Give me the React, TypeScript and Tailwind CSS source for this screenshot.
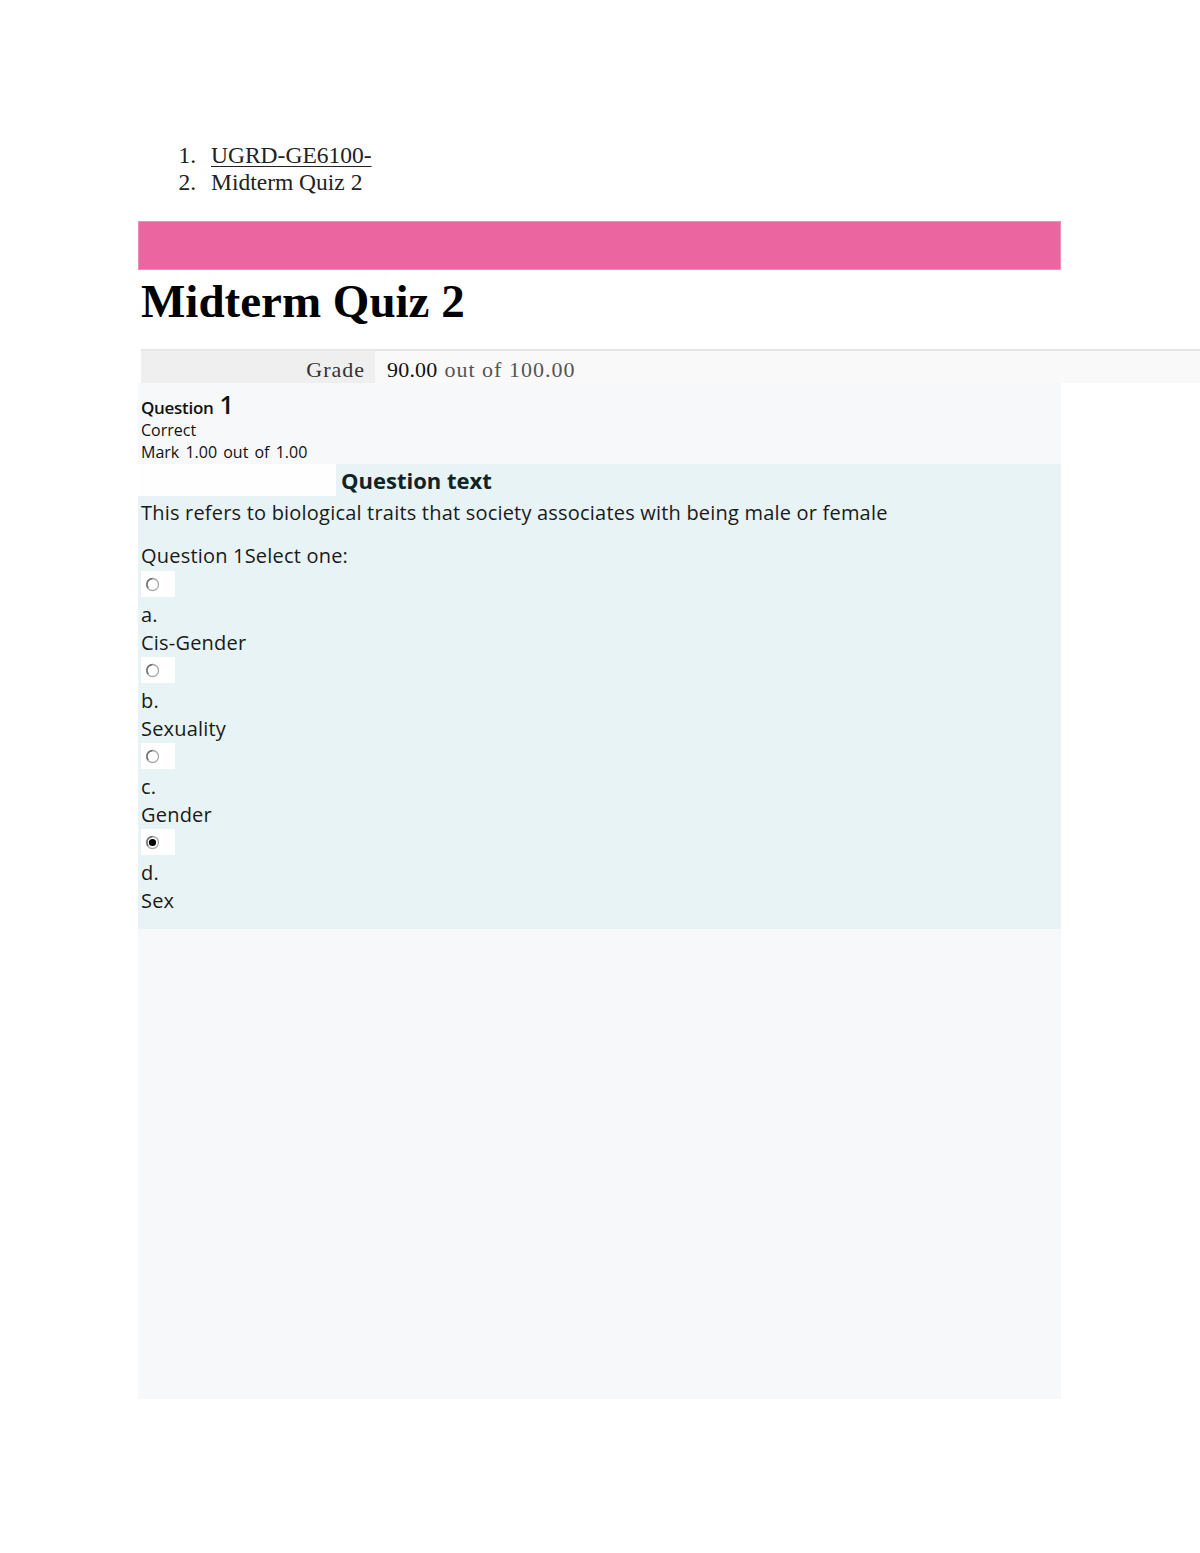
import React from "react";

const serif = { fontFamily: '"Liberation Serif", "Times New Roman", serif' };
const sans = { fontFamily: '"Open Sans", "Noto Sans", sans-serif' };

function Radio({ checked }: { checked?: boolean }) {
  return (
    <div className="w-[34px] h-[26px] bg-white flex items-center pl-[4px]">
      <svg width="15" height="15" viewBox="0 0 15 15">
        <circle cx="7.5" cy="7.5" r="6" fill="#ffffff" stroke="#a8a8a8" strokeWidth="1.3" />
        <path d="M3.3 11.2 A6 6 0 0 1 7.5 1.5" fill="none" stroke="#707070" strokeWidth="1.3" />
        {checked && <circle cx="7.5" cy="7.5" r="3.6" fill="#000" />}
      </svg>
    </div>
  );
}

const options = [
  { l: "a.", t: "Cis-Gender" },
  { l: "b.", t: "Sexuality" },
  { l: "c.", t: "Gender" },
  { l: "d.", t: "Sex", checked: true },
];

export default function App() {
  return (
    <div className="w-[1200px] min-h-[1553px] bg-white overflow-hidden">
      <div className="pt-[142px] text-[23.5px] leading-[27px] text-[#222]" style={serif}>
        <div className="flex">
          <span className="w-[211px] pr-[15px] text-right">1.</span>
          <span className="underline decoration-1 underline-offset-[3px]">UGRD-GE6100-</span>
        </div>
        <div className="flex">
          <span className="w-[211px] pr-[15px] text-right">2.</span>
          <span>Midterm Quiz 2</span>
        </div>
      </div>

      <div className="ml-[138px] w-[923px] mt-[25px]">
        <div className="h-[49px] bg-[#eb66a1] border border-[#f08cb8]" />
        <h1 className="mt-[8px] h-[46px] leading-[46px] text-[47px] font-bold text-black pl-[3px]" style={serif}>
          Midterm Quiz 2
        </h1>

        <div className="mt-[25px] ml-[3px] w-[1059px] border-t-2 border-[#e6e6e6]">
          <div className="flex h-[32px] items-center text-[22px] text-[#333] tracking-[1px]" style={serif}>
            <div className="w-[234px] h-full bg-[#efefef] flex items-center justify-end pr-[10px] pt-[5px]">
              Grade
            </div>
            <div className="flex-1 h-full bg-[#f9f9f9] flex items-center pl-[12px] pt-[5px]">
              <span className="text-[#111] tracking-[0.2px]">90.00</span>
              <span className="ml-[7px] text-[#555]">out of 100.00</span>
            </div>
          </div>
        </div>

        <div className="h-[81px] bg-[#f7f8fa] pl-[3px] pt-[5px] text-[#111]" style={sans}>
          <div className="h-[28px] flex items-end leading-none">
            <span className="text-[17px] font-semibold tracking-[-0.3px]">Question</span>
            <span className="text-[25px] font-semibold ml-[6px] relative top-[1px]">1</span>
          </div>
          <div className="text-[16px] leading-[24px] mt-[2px]">Correct</div>
          <div className="text-[16px] leading-[20px] [word-spacing:2px]">Mark 1.00 out of 1.00</div>
        </div>

        <div className="bg-[#e7f3f5] pb-[14px] text-[#1a1a1a]" style={sans}>
          <div className="flex h-[32px]">
            <div className="w-[198px] bg-[#fefefe]" />
            <div className="pl-[5px] text-[22px] font-bold leading-[33px] text-[#0f2426]">Question text</div>
          </div>
          <div className="pl-[3px] text-[20px] leading-[32px] tracking-[0.2px] mt-[1px]">
            This refers to biological traits that society associates with being male or female
          </div>
          <div className="pl-[3px] text-[20px] leading-[28px] tracking-[0.2px] mt-[13px]">Question 1Select one:</div>
          <div className="pl-[3px] mt-[1px]">
            {options.map((o) => (
              <div key={o.l}>
                <div className="h-[30px]">
                  <Radio checked={o.checked} />
                </div>
                <div className="text-[20px] leading-[28px] tracking-[0.2px]">{o.l}</div>
                <div className="text-[20px] leading-[28px] tracking-[0.2px]">{o.t}</div>
              </div>
            ))}
          </div>
        </div>

        <div className="h-[470px] bg-[#f7f8fa]" />
      </div>
    </div>
  );
}
